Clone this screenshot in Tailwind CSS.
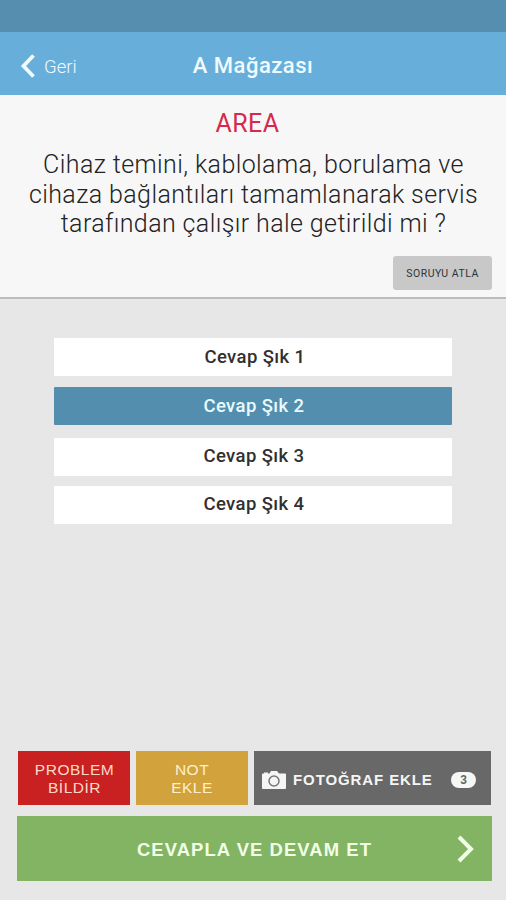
<!DOCTYPE html>
<html lang="tr">
<head>
<meta charset="utf-8">
<title>A Mağazası</title>
<script src="https://cdn.jsdelivr.net/npm/@tailwindcss/browser@4"></script>
</head>
<body class="h-[900px] w-[506px] overflow-hidden bg-[#e7e7e7] font-['Roboto',sans-serif]">
<div class="flex h-full flex-col">
  <div class="h-8 shrink-0 bg-[#558eae]"></div>
  <header class="grid h-[63px] shrink-0 grid-cols-[120px_1fr_120px] items-center bg-[#67afda] text-[#f0faff]">
    <div class="flex items-center pl-[20px] pt-1">
      <svg class="h-6 w-4" viewBox="0 0 16 24" fill="none" stroke="currentColor" stroke-width="3.800"><path d="M13.500 1.500 3.500 12l10 10.500"/></svg>
      <span class="pl-[8px] pt-[2px] text-[18.500px] font-light leading-6">Geri</span>
    </div>
    <h1 class="pt-[4px] text-center text-[22px] font-medium leading-7 tracking-[0.500px] whitespace-nowrap">A Mağazası</h1>
  </header>
  <section class="flex h-[204px] shrink-0 flex-col border-b-2 border-[#bcbcbc] bg-[#f7f7f7] pt-[14px]">
    <h2 class="pr-[11px] text-center text-[25px] leading-[30px] tracking-[0.400px] text-[#d42a4c]">AREA</h2>
    <p class="pt-[11px] pl-px text-center text-[25px] font-light leading-[29.500px] tracking-[0.400px] text-[#222] whitespace-nowrap">Cihaz temini, kablolama, borulama ve<br>cihaza bağlantıları tamamlanarak servis<br>tarafından çalışır hale getirildi mi ?</p>
    <button class="mt-[17px] mr-[14px] h-[34px] w-[99px] shrink-0 self-end rounded-[3px] bg-[#c8c8c8] pt-[2px] text-[10.500px] tracking-[0.500px] text-[#333]">SORUYU ATLA</button>
  </section>
  <main class="flex grow flex-col pt-[39px] pr-[54px] pl-[54px] text-[18.500px] font-medium tracking-[0.400px] text-[#303030]">
    <button class="h-[38px] w-[398px] bg-white pt-[2px] pl-[4px]">Cevap Şık 1</button>
    <button class="mt-[11px] h-[38px] w-[398px] rounded-[1px] bg-[#538eae] pt-px pl-[2px] text-[#e8fbff]">Cevap Şık 2</button>
    <button class="mt-[13px] h-[38px] w-[398px] bg-white pl-[2px]">Cevap Şık 3</button>
    <button class="mt-[10px] h-[38px] w-[398px] bg-white pl-[2px]">Cevap Şık 4</button>
  </main>
  <footer class="shrink-0 pb-[19px] pr-[14px] pl-[17px] font-['Liberation_Sans',sans-serif]">
    <div class="ml-px flex h-[54px] w-[473px] gap-[6px]">
      <button class="w-[112px] bg-[#c92022] pt-[2px] pl-px text-[15.500px] leading-[18px] tracking-[0.500px] text-[#ffd9c8]">PROBLEM<br>BİLDİR</button>
      <button class="w-[112px] bg-[#d2a23c] pt-[2px] text-[15.500px] leading-[18px] tracking-[0.500px] text-[#fff0cb]">NOT<br>EKLE</button>
      <button class="flex w-[237px] items-center bg-[#686868] pt-1 pl-[8px] text-[15px] font-bold text-[#f5f5f5]">
        <svg class="h-[18px] w-6 shrink-0" viewBox="0 0 24 18"><path fill="currentColor" d="M1 2.500h1V1.500h4v1h1.500L9 0h6l2 2.500h6a1 1 0 0 1 1 1V17a1 1 0 0 1-1 1H1a1 1 0 0 1-1-1V3.500a1 1 0 0 1 1-1Z"/><circle cx="12" cy="10" r="5" fill="none" stroke="#777" stroke-width="1.500"/></svg>
        <span class="pl-[7px] tracking-[0.900px] whitespace-nowrap">FOTOĞRAF EKLE</span>
        <span class="mr-[15px] ml-auto flex h-4 w-[25px] items-center justify-center rounded-full bg-[#f7f7f7] text-[12px] text-[#666]">3</span>
      </button>
    </div>
    <button class="mt-[11px] grid h-[65px] w-[475px] grid-cols-[60px_1fr_60px] items-center bg-[#83b464] text-[#f2ffe7]">
      <span class="col-start-2 pt-[2px] text-[18.400px] font-bold tracking-[1.100px] whitespace-nowrap">CEVAPLA VE DEVAM ET</span>
      <svg class="ml-[24px] h-7 w-[20px]" viewBox="0 0 20 28" fill="none" stroke="currentColor" stroke-width="4"><path d="m3 2 12 12L3 26"/></svg>
    </button>
  </footer>
</div>
</body>
</html>
